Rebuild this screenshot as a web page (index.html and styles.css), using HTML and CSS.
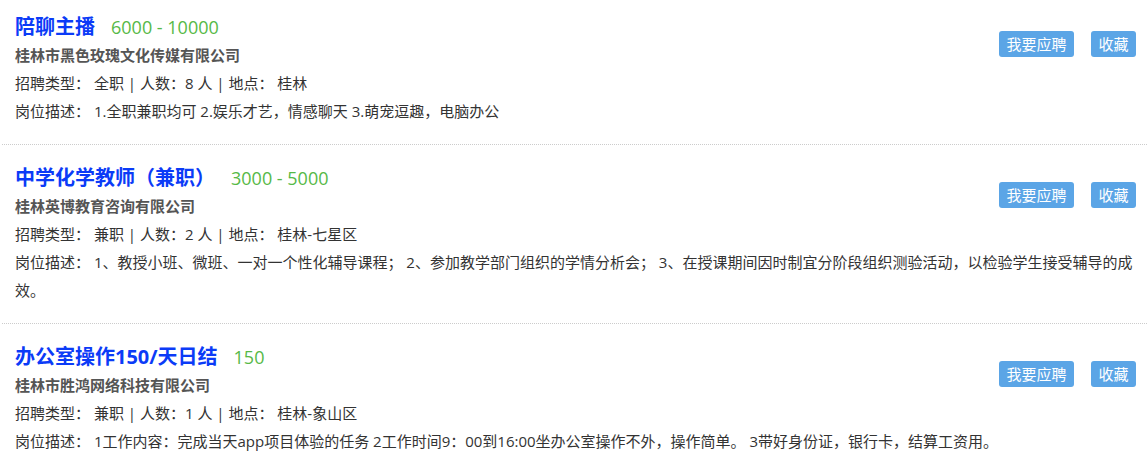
FILE: index.html
```html
<!DOCTYPE html>
<html lang="zh-CN">
<head>
<meta charset="UTF-8">
<title>职位列表</title>
<link rel="stylesheet" href="styles.css">
</head>
<body>
<ul class="job-list">
    <li class="job">
        <div class="job-actions">
            <a class="btn" href="#">我要应聘</a>
            <a class="btn" href="#">收藏</a>
        </div>
        <h3 class="job-title"><a href="#">陪聊主播</a><span class="salary">6000 - 10000</span></h3>
        <p class="company">桂林市黑色玫瑰文化传媒有限公司</p>
        <p class="info">招聘类型： 全职 | 人数：8 人 | 地点： 桂林</p>
        <p class="desc">岗位描述： 1.全职兼职均可 2.娱乐才艺，情感聊天 3.萌宠逗趣，电脑办公</p>
    </li>
    <li class="job">
        <div class="job-actions">
            <a class="btn" href="#">我要应聘</a>
            <a class="btn" href="#">收藏</a>
        </div>
        <h3 class="job-title"><a href="#">中学化学教师（兼职）</a><span class="salary">3000 - 5000</span></h3>
        <p class="company">桂林英博教育咨询有限公司</p>
        <p class="info">招聘类型： 兼职 | 人数：2 人 | 地点： 桂林-七星区</p>
        <p class="desc">岗位描述： 1、教授小班、微班、一对一个性化辅导课程； 2、参加教学部门组织的学情分析会； 3、在授课期间因时制宜分阶段组织测验活动，以检验学生接受辅导的成效。</p>
    </li>
    <li class="job">
        <div class="job-actions">
            <a class="btn" href="#">我要应聘</a>
            <a class="btn" href="#">收藏</a>
        </div>
        <h3 class="job-title"><a href="#">办公室操作150/天日结</a><span class="salary">150</span></h3>
        <p class="company">桂林市胜鸿网络科技有限公司</p>
        <p class="info">招聘类型： 兼职 | 人数：1 人 | 地点： 桂林-象山区</p>
        <p class="desc">岗位描述： 1工作内容：完成当天app项目体验的任务 2工作时间9：00到16:00坐办公室操作不外，操作简单。 3带好身份证，银行卡，结算工资用。</p>
    </li>
</ul>
</body>
</html>
```

FILE: styles.css
```css
body {
margin: 0;
font-family: "Open Sans", "Noto Sans CJK SC", sans-serif;
font-size: 15px;
color: #333;
background: #fff;
}

.job-list {
list-style: none;
margin: 0;
padding: 0 0 0 2px;
}

.job {
padding: 18px 11px 19px 13px;
border-bottom: 1px dotted #ccc;
}

.job:first-child {
padding-top: 12px;
}

.job-actions {
float: right;
margin-top: 19px;
display: flex;
gap: 17px;
}

.btn {
display: block;
height: 26px;
line-height: 26px;
padding: 0 7.5px;
font-size: 15px;
color: #fff;
background: #5ba5e6;
border-radius: 3px;
text-decoration: none;
}

.job-title {
margin: 0;
height: 30px;
line-height: 30px;
font-size: 20px;
font-weight: bold;
}

.job-title a {
color: #0b3bf7;
text-decoration: none;
}

.salary {
margin-left: 16px;
font-size: 18px;
font-weight: normal;
color: #56b947;
}

.company {
margin: 0;
line-height: 27px;
font-weight: bold;
color: #555;
}

.info,
.desc {
margin: 0;
line-height: 28px;
}
```
